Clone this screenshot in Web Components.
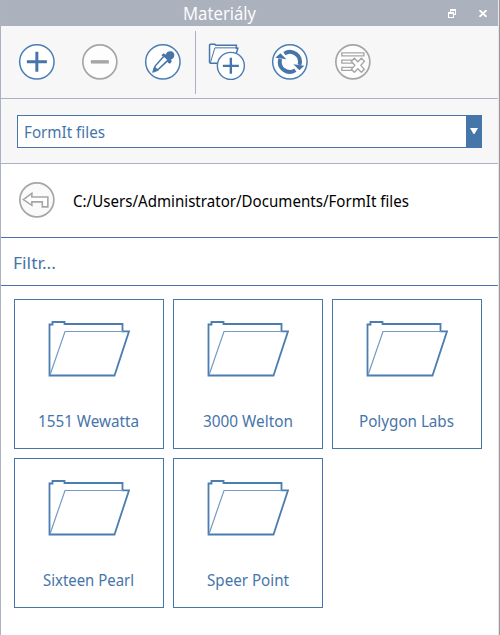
<!DOCTYPE html>
<html lang="cs">
<head>
<meta charset="utf-8">
<title>Materiály</title>
<style>
html,body{margin:0;height:100%;overflow:hidden;background:#fff}
body{font:16px "Noto Sans","Open Sans",sans-serif;--blue:#4675aa;--grey:#a6a6a6;--edge:#abb3c2}
</style>
</head>
<body>
<materials-panel></materials-panel>
<script>
const define=(name,html,setup)=>{
  const t=document.createElement('template');
  t.innerHTML=html;
  customElements.define(name,class extends HTMLElement{
    connectedCallback(){
      if(this.shadowRoot)return;
      this.attachShadow({mode:'open'}).append(t.content.cloneNode(true));
      if(setup)setup(this,this.shadowRoot);
    }
  });
};

/* One line of text condensed or widened to a given width */
define('fit-text',`<style>:host{display:block;white-space:nowrap;line-height:20px;height:20px}
span{display:inline-block;transform-origin:0 50%}</style><span><slot></slot></span>`,(el,root)=>{
  const w=+el.getAttribute('width'),s=root.querySelector('span');
  el.style.width=w+'px';
  s.style.transform='scaleX('+w/s.getBoundingClientRect().width+')';
});

const icons={
add:`<circle cx="19" cy="19" r="17.2" fill="#fff" stroke="#4a7db5" stroke-width="1.5"/><path d="M19 9v20M9 19h20" stroke="#4675aa" stroke-width="3"/>`,
remove:`<circle cx="19" cy="19" r="17" fill="#fdfdfd" stroke="#a6a6a6" stroke-width="1.7"/><path d="M10 19h18" stroke="#a6a6a6" stroke-width="3.4"/>`,
pick:`<circle cx="19" cy="19" r="17.2" fill="#fff" stroke="#4a7db5" stroke-width="1.5"/><path d="M20 13.5L11.500 23l-1.800 5.200L15 26l9-8.500" fill="#fff" stroke="#4675aa" stroke-width="1.500"/><path d="M9 29.500l1.500-5.500L14.500 27.500z" fill="#4675aa" stroke="#4675aa" stroke-width=".8"/><path d="M17.500 12.500l2.300-2 2 1.400c.8-3 3.200-4 5.700-3.500 2.700.7 3.700 3.700 2.500 6-.7 1.200-1.700 1.900-3 2.200l1 1.800-1.800 2.400-2.200-.9-.8-3-3-2.800z" fill="#4675aa"/>`,
folderadd:`<path d="M1.700 20V2.200L2.500 1.500h4.500l1 1h20.500v3h1.500l-2.500 8M1.700 20.500h10" fill="#fff" stroke="#4675aa" stroke-width="1.500"/><path d="M2.500 20L7 5h22" fill="none" stroke="#4675aa" stroke-width="1"/><circle cx="23" cy="23" r="13.500" fill="#fff" stroke="#4a7db5" stroke-width="1.400"/><path d="M23 15v16M15 23h16" stroke="#4675aa" stroke-width="2.400"/>`,
sync:`<circle cx="19" cy="19" r="17.2" fill="#fff" stroke="#4a7db5" stroke-width="1.500"/><path d="M13.500 10.700A10 10 0 0 1 28.600 22M24.500 27.300A10 10 0 0 1 9.400 16" fill="none" stroke="#4675aa" stroke-width="3.900"/><path d="M22.500 21.500L33.500 23 28.500 27.500zM15.500 16.500L4.500 15 9.500 10.500z" fill="#4675aa"/>`,
clear:`<circle cx="19" cy="19" r="17" fill="#fdfdfd" stroke="#a6a6a6" stroke-width="1.700"/><g fill="#fff" stroke="#a6a6a6" stroke-width="1.400"><path d="M8 10h22v3h-22zM8 17.300h13v3h-13zM8 24.500h11v3h-11z"/><path d="M17.500 18.500l3-3 3.500 3.500 3.500-3.500 3 3-3.500 4 3.500 4-3 3-3.500-3.500-3.500 3.500-3-3 3.500-4z"/></g>`,
back:`<circle cx="19" cy="19" r="17" fill="#fafafa" stroke="#a6a6a6" stroke-width="1.700"/><path d="M5.500 18.700L14 12.500V16.200H30V26H24.500V21H14V24.500z" fill="#fff" stroke="#a6a6a6" stroke-width="1.600"/>`};
define('tool-icon',`<style>:host{display:block;width:38px;height:38px}svg{display:block}</style><svg width="38" height="38" viewBox="0.15 0.15 38 38"></svg>`,
  (el,root)=>{root.querySelector('svg').innerHTML=icons[el.getAttribute('name')]});

define('title-bar',`<style>
:host{display:grid;grid-template-columns:1fr auto;align-items:center;height:26px;box-sizing:border-box;background:#abb2be;color:#fff;padding:0 11px 0 182px}
fit-text{font:18.500px/20px "Open Sans","Noto Sans",sans-serif;padding-bottom:1px}
div{display:flex;gap:23px;align-items:center}
svg{display:block}
</style><fit-text width="73">Materiály</fit-text>
<div><svg width="8" height="9" viewBox="0 0 8 9" fill="none" stroke="#fff" shape-rendering="crispEdges"><path d="M0 4h6M2 1h6" stroke-width="2"/><path d="M.5 4v4.500h5V4M2.500 1v2M7.500 1v4.500H6"/></svg>
<svg width="8" height="7" viewBox="0 0 8 7"><path d="M.5 .2l7 6.600M7.500 .2l-7 6.600" stroke="#fff" stroke-width="1.900"/></svg></div>`);

define('tool-bar',`<style>
:host{display:flex;height:73px;box-sizing:border-box;background:#f7f7f7;border-bottom:1px solid var(--edge);padding:17px 0 0 17px;gap:25px}
i{width:1px;height:63px;background:var(--edge);margin:-12px -13px 0 -12px}
</style><tool-icon name="add"></tool-icon><tool-icon name="remove"></tool-icon><tool-icon name="pick"></tool-icon><i></i><tool-icon name="folderadd"></tool-icon><tool-icon name="sync"></tool-icon><tool-icon name="clear"></tool-icon>`);

define('library-select',`<style>
:host{display:block;height:65px;box-sizing:border-box;background:#f7f7f7;border-bottom:1px solid var(--edge);padding:16px 16px 0}
.box{display:flex;justify-content:space-between;align-items:center;height:33px;box-sizing:border-box;border:1px solid var(--blue);background:#fff;color:var(--blue);padding-left:6px}
.arrow{width:15px;height:31px;background:var(--blue);display:grid;place-items:center}
svg{display:block;margin-bottom:1px}
</style><div class="box"><fit-text width="81"><slot></slot></fit-text><span class="arrow"><svg width="8" height="6" viewBox="0 0 8 6"><path d="M0 0h8L4.500 6h-1z" fill="#fff"/></svg></span></div>`);

define('path-row',`<style>
:host{display:flex;align-items:center;gap:17px;height:74px;box-sizing:border-box;border-bottom:1px solid var(--blue);padding-left:17px;color:#000}
tool-icon{margin-bottom:1px}
</style><tool-icon name="back"></tool-icon><fit-text width="336"><slot></slot></fit-text>`);

define('filter-row',`<style>
:host{display:flex;align-items:center;height:48px;box-sizing:border-box;border-bottom:1px solid var(--blue);padding:3px 0 0 11.500px;color:var(--blue)}
</style><fit-text width="43"><slot></slot></fit-text>`);

define('folder-card',`<style>
:host{display:flex;flex-direction:column;align-items:center;justify-content:space-between;height:150px;box-sizing:border-box;border:1px solid var(--blue);color:var(--blue);padding:20px 0 17px}
svg{display:block}
fit-text{margin-right:1px}
</style><svg width="82" height="58" viewBox="0 0 82 58" fill="none" stroke="#4b7db0"><path d="M1.500 55.500V4.500H4.500V2H16.500V4H74.500V11.300H81L66.500 55.500Z" stroke-width="1.800"/><path d="M2 55L17 11.500H75" stroke="#739bc3" stroke-width="1.200"/></svg><fit-text></fit-text>`,
(el,root)=>{const f=root.querySelector('fit-text'),n=document.createElement('fit-text');
  n.setAttribute('width',el.getAttribute('width'));n.append(document.createElement('slot'));f.replaceWith(n)});

define('card-grid',`<style>
:host{display:grid;grid-template-columns:repeat(3,150px);gap:9px;padding:13px}
</style><slot></slot>`);

define('materials-panel',`<style>
:host{display:flex;flex-direction:column;height:635px;box-sizing:border-box;border-left:1px solid var(--edge);border-right:1px solid #999;padding-right:1px;background:linear-gradient(#e8e8e8,#e8e8e8) right/1px 100% no-repeat,#fff}
</style><title-bar></title-bar><tool-bar></tool-bar><library-select>FormIt files</library-select><path-row>C:/Users/Administrator/Documents/FormIt files</path-row><filter-row>Filtr...</filter-row>
<card-grid><folder-card width="101">1551 Wewatta</folder-card><folder-card width="90">3000 Welton</folder-card><folder-card width="95">Polygon Labs</folder-card><folder-card width="91">Sixteen Pearl</folder-card><folder-card width="82">Speer Point</folder-card></card-grid>`);
</script>
</body>
</html>
